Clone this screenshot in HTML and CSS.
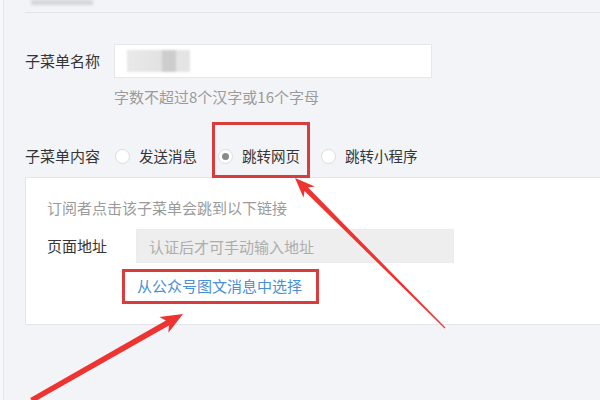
FILE: index.html
```html
<!DOCTYPE html>
<html lang="zh-CN">
<head>
    <meta charset="UTF-8">
    <meta name="viewport" content="width=device-width, initial-scale=1.0">
    <title>子菜单设置</title>
    <link rel="stylesheet" href="styles.css">
</head>
<body>
    <div class="page">
        <div class="top-bar">
            <span class="blur-title"></span>
        </div>

        <div class="form">
            <div class="row">
                <span class="row-label">子菜单名称</span>
                <div class="field">
                    <div class="text-input">
                        <span class="censor"></span>
                    </div>
                    <div class="hint">字数不超过8个汉字或16个字母</div>
                </div>
            </div>

            <div class="row radio-row">
                <span class="row-label">子菜单内容</span>
                <div class="radios">
                    <span class="radio"><i class="dot"></i>发送消息</span>
                    <span class="radio checked"><i class="dot"></i>跳转网页</span>
                    <span class="radio"><i class="dot"></i>跳转小程序</span>
                </div>
            </div>
        </div>

        <div class="panel">
            <div class="panel-tip">订阅者点击该子菜单会跳到以下链接</div>
            <div class="row address-row">
                <span class="row-label">页面地址</span>
                <div class="text-input disabled">认证后才可手动输入地址</div>
            </div>
            <div class="link-row">
                <a class="link">从公众号图文消息中选择</a>
            </div>
        </div>
    </div>

    <!-- 标注：红框和箭头 -->
    <svg class="marks" width="600" height="400" viewBox="0 0 600 400">
        <rect x="213.5" y="123.5" width="95" height="53" fill="none" stroke="#d93c3d" stroke-width="3"/>
        <rect x="123.5" y="270.5" width="194" height="32" fill="none" stroke="#d93c3d" stroke-width="3"/>
        <polygon fill="#ee3430" points="295,178 314.8,186.5 308.1,187.5 445.4,327.6 444.6,328.4 304.5,191.1 303.5,197.8"/>
        <polygon fill="#ee3430" points="183,314 168.4,332.7 168.9,325.6 32.8,402.6 30.2,398.0 165.9,320.4 159.4,317.1"/>
    </svg>
</body>
</html>
```

FILE: styles.css
```css
body {
    margin: 0;
    width: 600px;
    height: 400px;
    overflow: hidden;
    background: #f8f8fa;
    font-family: "Noto Sans CJK SC", "Liberation Sans", sans-serif;
    font-size: 15px;
    color: #353535;
    position: relative;
}

.page {
    margin-left: 3px;
    height: 400px;
    border-left: 1px solid #e4e5ea;
    background: #f3f4f8;
}

.top-bar {
    margin-left: 21px;
    height: 12px;
    border-bottom: 1px solid #e2e3e8;
}

.blur-title {
    display: block;
    margin-left: 6px;
    width: 62px;
    height: 5px;
    background: #d4d5d8;
    filter: blur(1.5px);
}

.form {
    padding-left: 21px;
}

.row {
    display: flex;
    align-items: flex-start;
}

.row:first-child {
    margin-top: 31px;
}

.row-label {
    width: 89px;
    flex-shrink: 0;
    line-height: 34px;
}

.text-input {
    box-sizing: border-box;
    width: 318px;
    height: 34px;
    border: 1px solid #e6e7eb;
    background: #fff;
    display: flex;
    align-items: center;
    padding-left: 12px;
}

.censor {
    display: block;
    width: 63px;
    height: 22px;
    background: linear-gradient(90deg, #e9e9e9 0, #e2e2e2 55%, #cdcdcd 55%, #cdcdcd 78%, #e4e4e4 78%);
    filter: blur(1px);
}

.hint {
    margin-top: 9px;
    line-height: 20px;
    color: #9b9b9b;
}

.radio-row {
    margin-top: 39px;
}

.radio-row .row-label {
    line-height: 20px;
}

.radios {
    display: flex;
    align-items: center;
    line-height: 20px;
    font-size: 14.5px;
}

.radio {
    display: flex;
    align-items: center;
    margin-left: 1px;
    margin-right: 20px;
}

.dot {
    box-sizing: border-box;
    width: 15px;
    height: 15px;
    border: 1px solid #dcdcdc;
    border-radius: 50%;
    background: #fff;
    margin-right: 9px;
    display: flex;
    align-items: center;
    justify-content: center;
}

.checked .dot::after {
    content: "";
    width: 7px;
    height: 7px;
    border-radius: 50%;
    background: #8a8a8a;
}

.panel {
    margin: 11px 0 0 21px;
    background: #fff;
    border: 1px solid #e4e5e9;
    border-right: none;
    padding: 20px 0 28px 21px;
}

.panel-tip {
    line-height: 20px;
    color: #9b9b9b;
}

.address-row {
    margin-top: 11px;
}

.text-input.disabled {
    background: #eeeeee;
    border-color: #ececec;
    color: #adadad;
}

.link-row {
    margin-top: 13px;
    padding-left: 90px;
    line-height: 20px;
}

.link {
    color: #4a90d6;
}

.marks {
    position: absolute;
    left: 0;
    top: 0;
    pointer-events: none;
}
```
